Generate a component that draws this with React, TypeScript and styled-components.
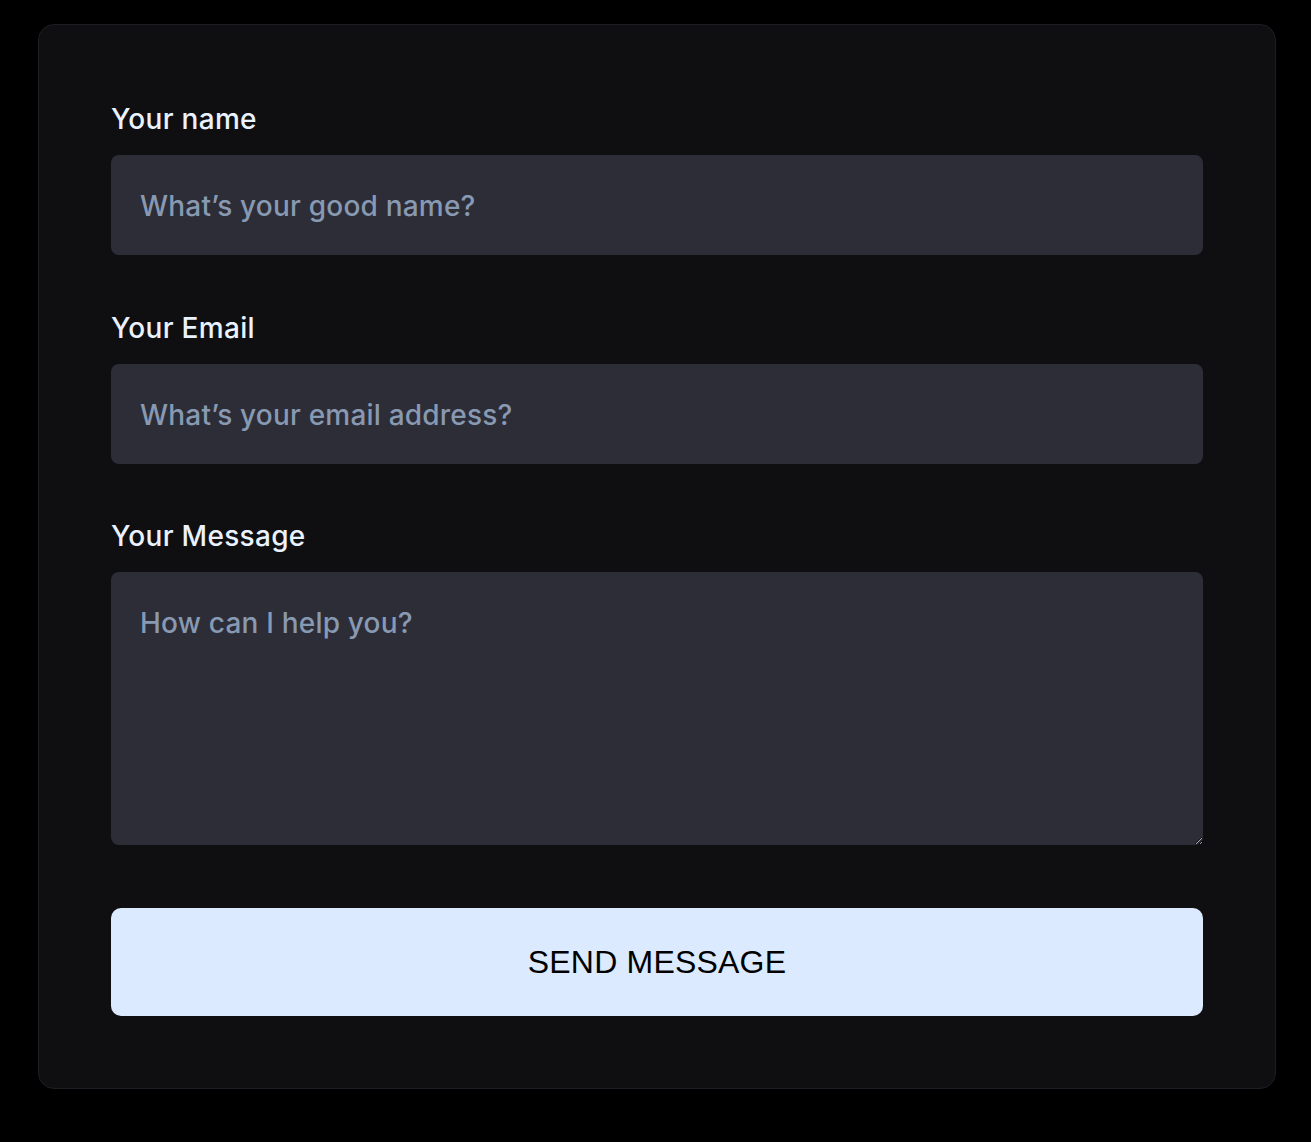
import React from "react";
import styled, { createGlobalStyle } from "styled-components";

const Global = createGlobalStyle`
  html, body { margin: 0; padding: 0; background: #000; }
  body { font-family: Inter, "Noto Sans", sans-serif; }
  * { box-sizing: border-box; }
`;

const Page = styled.div`
  padding: 24px 35px 53px 38px;
  background: #000;
  min-height: 1142px;
`;

const Card = styled.form`
  width: 1238px;
  background: #0f0f12;
  border: 1px solid #1d1d23;
  border-radius: 16px;
  padding: 72px;
  display: flex;
  flex-direction: column;
`;

const Field = styled.label<{ $gap?: number }>`
  display: flex;
  flex-direction: column;
  margin-bottom: ${(p) => p.$gap ?? 51}px;
`;

const LabelText = styled.span`
  color: #eaf2ff;
  font-size: 28px;
  font-weight: 500;
  letter-spacing: 0.3px;
  line-height: 44px;
  margin-bottom: 14px;
`;

const Input = styled.input`
  height: 100px;
  background: #2d2d38;
  border: none;
  outline: none;
  border-radius: 8px;
  padding: 2px 29px 0;
  color: #eaf2ff;
  font-family: Inter, "Noto Sans", sans-serif;
  font-size: 28px;
  font-weight: 500;
  letter-spacing: 0.2px;
  &::placeholder { color: #8899b2; }
`;

const TextArea = styled.textarea`
  height: 273px;
  background: #2d2d38;
  border: none;
  outline: none;
  border-radius: 8px;
  padding: 32px 29px;
  color: #eaf2ff;
  font-family: Inter, "Noto Sans", sans-serif;
  font-size: 28px;
  font-weight: 500;
  letter-spacing: 0.2px;
  line-height: 38px;
  &::placeholder { color: #8899b2; }
`;

const Button = styled.button`
  height: 108px;
  background: #dbeafe;
  border: none;
  border-radius: 10px;
  color: #000;
  font-family: "Liberation Sans", Arial, sans-serif;
  font-size: 32px;
  letter-spacing: 0.2px;
  cursor: pointer;
`;

export default function App() {
  return (
    <>
      <Global />
      <Page>
        <Card onSubmit={(e) => e.preventDefault()}>
          <Field $gap={51}>
            <LabelText>Your name</LabelText>
            <Input placeholder="What’s your good name?" />
          </Field>
          <Field $gap={50}>
            <LabelText>Your Email</LabelText>
            <Input placeholder="What’s your email address?" />
          </Field>
          <Field $gap={63}>
            <LabelText>Your Message</LabelText>
            <TextArea placeholder="How can I help you?" />
          </Field>
          <Button type="submit">SEND MESSAGE</Button>
        </Card>
      </Page>
    </>
  );
}
